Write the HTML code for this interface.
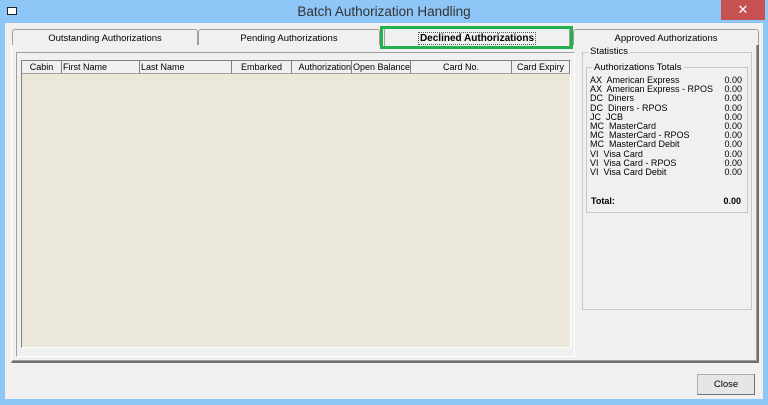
<!DOCTYPE html>
<html><head><style>
*{margin:0;padding:0;box-sizing:border-box}
body{width:768px;height:405px;background:#8ec6f7;font-family:"Liberation Sans",Tahoma,sans-serif;font-size:11px;color:#000;position:relative;overflow:hidden}
.abs{position:absolute}
.title{left:0;top:0;width:768px;height:23px;text-align:center;font-size:13.5px;line-height:23px;color:#333}
.client{left:5px;top:23px;width:758px;height:376px;background:#f0f0f0}
.tab{border:1px solid #a0a0a0;border-bottom:none;border-radius:3px 3px 0 0;background:#f0f0f0;text-align:center;font-size:9.5px;line-height:17px;height:16px}
.panel{left:11px;top:44px;width:748px;height:319px;border:1px solid #fff;border-right:2px solid #707070;border-bottom:2px solid #707070;box-shadow:inset -1px -1px 0 #a0a0a0}
.inner{left:16px;top:52px;width:559px;height:305px;border:1px solid #a0a0a0;border-right-color:#fff;border-bottom-color:#fff}
.grid{left:21px;top:60px;width:550px;height:288px;background:#ebe8d9;border:1px solid #808080;border-right-color:#fff;border-bottom-color:#fff}
.hd{top:61px;height:13px;background:#f0f0f0;border-right:1px solid #808080;border-bottom:1px solid #a0a0a0;font-size:9px;line-height:13px;text-align:center;overflow:hidden;white-space:nowrap}
.grp{border:1px solid #c8c8c8}
.row{left:590px;width:152px;font-size:9px;line-height:9.2px;white-space:pre}
.row span{float:right}
</style></head><body>
<div class="abs title">Batch Authorization Handling</div>
<div class="abs" style="left:7px;top:7px;width:10px;height:8px;border:1.5px solid #222;background:#fff"></div>
<div class="abs" style="left:721px;top:0;width:44px;height:20px;background:#c75050;color:#fff;text-align:center;font-size:13px;line-height:19px">✕</div>
<div class="abs client"></div>
<div class="abs panel"></div>
<div class="abs tab" style="left:12px;top:29px;width:186px">Outstanding Authorizations</div>
<div class="abs tab" style="left:198px;top:29px;width:182px">Pending Authorizations</div>
<div class="abs tab" style="left:573px;top:29px;width:186px">Approved Authorizations</div>
<div class="abs tab" style="left:384px;top:27px;width:186px;height:19px;font-weight:bold;font-size:10px;line-height:22px;border-color:#a0a0a0"><span style="outline:1px dotted #555;padding:0 1px">Declined Authorizations</span></div>
<div class="abs" style="left:380px;top:26px;width:193px;height:23px;border:3px solid #22b14c"></div>
<div class="abs inner"></div>
<div class="abs grid"></div>
<div class="abs hd" style="left:22px;width:40px">Cabin</div>
<div class="abs hd" style="left:62px;width:78px;text-align:left;padding-left:1px">First Name</div>
<div class="abs hd" style="left:140px;width:92px;text-align:left;padding-left:1px">Last Name</div>
<div class="abs hd" style="left:232px;width:60px">Embarked</div>
<div class="abs hd" style="left:292px;width:60px;text-align:right">Authorization</div>
<div class="abs hd" style="left:352px;width:59px;text-align:right">Open Balance</div>
<div class="abs hd" style="left:411px;width:101px">Card No.</div>
<div class="abs hd" style="left:512px;width:58px">Card Expiry</div>
<div class="abs grp" style="left:582px;top:52px;width:170px;height:258px"></div>
<div class="abs" style="left:588px;top:46px;background:#f0f0f0;padding:0 2px;font-size:9.5px">Statistics</div>
<div class="abs grp" style="left:586px;top:67px;width:162px;height:146px"></div>
<div class="abs" style="left:592px;top:62px;background:#f0f0f0;padding:0 2px;font-size:9.5px">Authorizations Totals</div>
<div class="abs row" style="top:76px">AX  American Express<span>0.00</span>
AX  American Express - RPOS<span>0.00</span>
DC  Diners<span>0.00</span>
DC  Diners - RPOS<span>0.00</span>
JC  JCB<span>0.00</span>
MC  MasterCard<span>0.00</span>
MC  MasterCard - RPOS<span>0.00</span>
MC  MasterCard Debit<span>0.00</span>
VI  Visa Card<span>0.00</span>
VI  Visa Card - RPOS<span>0.00</span>
VI  Visa Card Debit<span>0.00</span></div>
<div class="abs row" style="top:197px;font-weight:bold;left:591px;width:150px">Total:<span>0.00</span></div>
<div class="abs" style="left:697px;top:374px;width:58px;height:21px;border:1px solid #adadad;border-right-color:#707070;border-bottom-color:#707070;background:#e6e6e6;text-align:center;line-height:19px;font-size:9.5px">Close</div>
</body></html>
